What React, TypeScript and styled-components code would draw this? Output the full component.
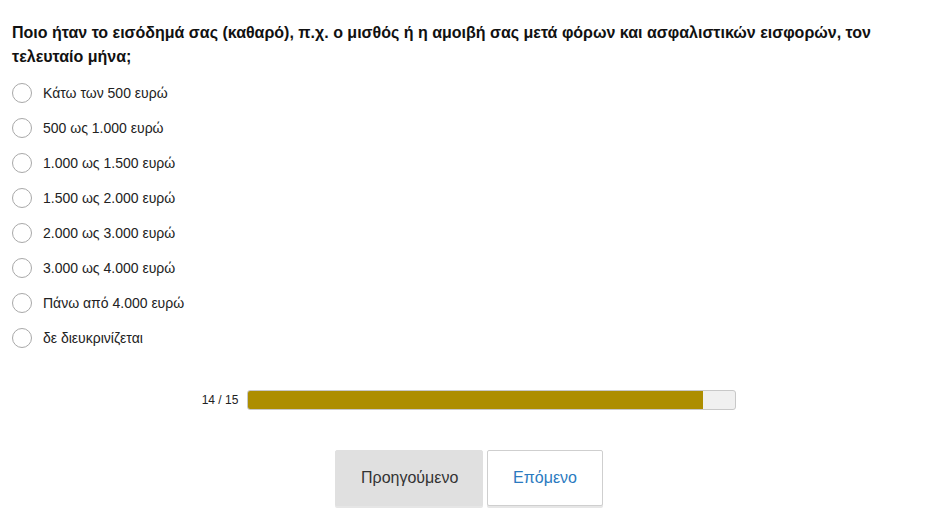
import { useState } from "react";
import styled, { createGlobalStyle } from "styled-components";

const GlobalStyle = createGlobalStyle`
  body {
    margin: 0;
    background: #fff;
    font-family: "Liberation Sans", Arial, sans-serif;
    color: #222;
  }
`;

const options = [
  "Κάτω των 500 ευρώ",
  "500 ως 1.000 ευρώ",
  "1.000 ως 1.500 ευρώ",
  "1.500 ως 2.000 ευρώ",
  "2.000 ως 3.000 ευρώ",
  "3.000 ως 4.000 ευρώ",
  "Πάνω από 4.000 ευρώ",
  "δε διευκρινίζεται",
];

const current = 14;
const total = 15;

const Page = styled.div`
  padding: 21px 16px 10px 12px;
`;

const Question = styled.h2`
  margin: 0 0 6px 0;
  font-size: 16px;
  font-weight: bold;
  line-height: 24px;
  color: #111;
`;

const OptionList = styled.div`
  display: flex;
  flex-direction: column;
`;

const OptionRow = styled.label`
  display: flex;
  align-items: center;
  gap: 11px;
  height: 35px;
  font-size: 14px;
  color: #222;
  cursor: pointer;
`;

const RadioCircle = styled.span<{ $checked: boolean }>`
  width: 18px;
  height: 18px;
  border: 1px solid #a8a8a8;
  border-radius: 50%;
  background: #fff;
  display: flex;
  align-items: center;
  justify-content: center;
  &::after {
    content: "";
    width: 10px;
    height: 10px;
    border-radius: 50%;
    background: ${(p) => (p.$checked ? "#2a7ac0" : "transparent")};
  }
`;

const ProgressRow = styled.div`
  display: flex;
  align-items: center;
  justify-content: center;
  gap: 9px;
  margin-top: 35px;
  font-size: 12px;
  color: #222;
`;

const ProgressTrack = styled.div`
  width: 487px;
  height: 18px;
  border: 1px solid #c8c8c8;
  border-radius: 3px;
  background: #f0f0f0;
  overflow: hidden;
`;

const ProgressFill = styled.div`
  height: 100%;
  background: #ad8e00;
`;

const ButtonRow = styled.div`
  display: flex;
  justify-content: center;
  gap: 4px;
  margin-top: 40px;
`;

const NavButton = styled.button<{ $primary?: boolean }>`
  height: 56px;
  padding: 0 25px;
  font-family: "Liberation Sans", Arial, sans-serif;
  font-size: 16px;
  border-radius: 2px;
  cursor: pointer;
  border: 1px solid ${(p) => (p.$primary ? "#cfcfcf" : "#e0e0e0")};
  background: ${(p) => (p.$primary ? "#fff" : "#e0e0e0")};
  color: ${(p) => (p.$primary ? "#2a7ac0" : "#333")};
  box-shadow: 0 2px 0 #e6e6e6;
`;

export default function App() {
  const [selected, setSelected] = useState<number | null>(null);

  return (
    <Page>
      <GlobalStyle />
      <Question>
        Ποιο ήταν το εισόδημά σας (καθαρό), π.χ. ο μισθός ή η αμοιβή σας μετά
        φόρων και ασφαλιστικών εισφορών, τον τελευταίο μήνα;
      </Question>
      <OptionList>
        {options.map((o, i) => (
          <OptionRow key={o} onClick={() => setSelected(i)}>
            <RadioCircle $checked={selected === i} />
            {o}
          </OptionRow>
        ))}
      </OptionList>
      <ProgressRow>
        <span>
          {current} / {total}
        </span>
        <ProgressTrack>
          <ProgressFill style={{ width: `${(current / total) * 100}%` }} />
        </ProgressTrack>
      </ProgressRow>
      <ButtonRow>
        <NavButton style={{ width: 148 }}>Προηγούμενο</NavButton>
        <NavButton $primary style={{ width: 116 }}>
          Επόμενο
        </NavButton>
      </ButtonRow>
    </Page>
  );
}
